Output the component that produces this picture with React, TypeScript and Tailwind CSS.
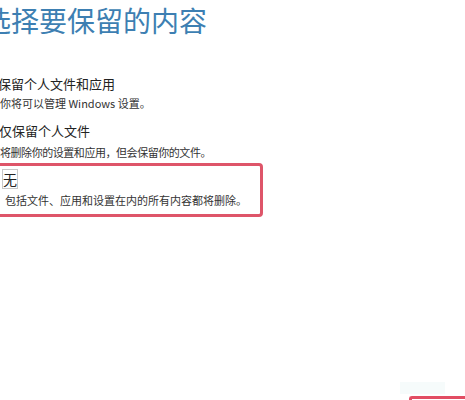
import React from "react";

export default function App() {
  const font = { fontFamily: '"Noto Sans CJK SC", "Noto Sans", sans-serif' };
  return (
    <div className="relative w-[465px] h-[400px] overflow-hidden bg-white" style={font}>
      <div className="flex flex-col">
        <div className="ml-[-17px] mt-[0px] text-[28px] leading-[40px] text-[#3d7fb2] whitespace-nowrap">
          选择要保留的内容
        </div>
        <div className="mt-[35px] flex flex-col">
          <div className="ml-[-2px] text-[13px] leading-[18px] text-[#222]">保留个人文件和应用</div>
          <div className="mt-[2px] text-[11px] leading-[16px] text-[#333]">你将可以管理 Windows 设置。</div>
          <div className="ml-[-1px] mt-[11px] text-[13px] leading-[18px] text-[#222]">仅保留个人文件</div>
          <div className="mt-[4px] text-[11px] leading-[16px] text-[#333] tracking-[-0.45px]">将删除你的设置和应用，但会保留你的文件。</div>
        </div>
        <div className="ml-[-12px] mt-[3px] w-[275px] h-[54px] rounded-[4px] border-[3px] border-[#de5569] flex flex-col pl-[12px] pt-[4px]">
          <div className="flex">
            <span className="text-[14px] leading-[18px] text-[#222] outline outline-1 outline-[#c8c8c8]">无</span>
          </div>
          <div className="mt-[4px] ml-[2px] text-[11px] leading-[16px] text-[#333]">包括文件、应用和设置在内的所有内容都将删除。</div>
        </div>
      </div>
      <div className="absolute left-[400px] top-[382px] w-[45px] h-[12px] bg-[#f6fbfb]" />
      <div className="absolute left-[409px] top-[396px] w-[70px] h-[10px] rounded-[3px] border-t-[3px] border-l-[3px] border-[#e24d63]" />
    </div>
  );
}
